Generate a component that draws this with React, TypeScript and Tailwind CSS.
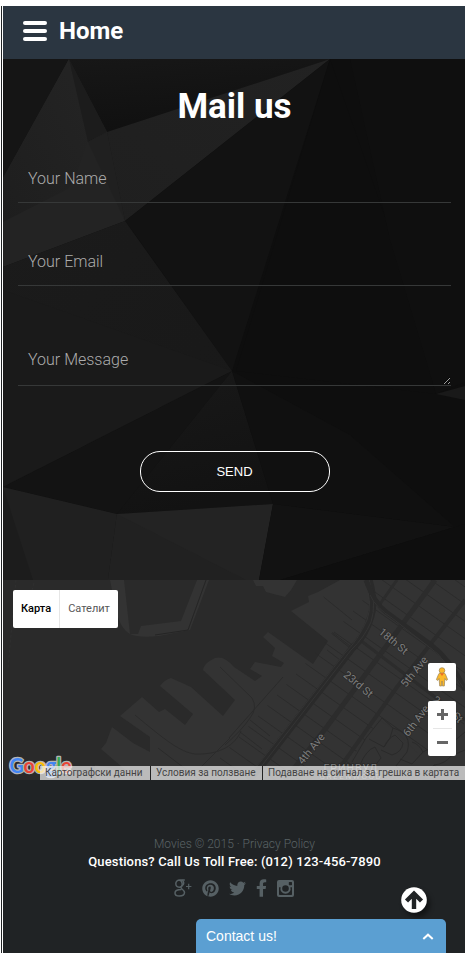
import React from "react";
import { FaPinterest, FaTwitter, FaFacebookF } from "react-icons/fa";

type Facet = { p: string; c: string };

const facets: Facet[] = [
  { p: "3,59 69,59 3,178", c: "#151515" },
  { p: "69,59 330,59 107,132", c: "url(#topShade)" },
  { p: "69,59 3,178 3,267 125,221 107,132", c: "#232323" },
  { p: "69,59 88,142 75,178 68,189 3,222 3,178", c: "url(#leftShade)" },
  { p: "69,59 107,132 88,142", c: "#1c1c1c" },
  { p: "107,132 88,142 125,221", c: "#202020" },
  { p: "330,59 107,132 125,221", c: "url(#beam)" },
  { p: "330,59 125,221 139,240 232,371", c: "#121212" },
  { p: "330,59 275,242 236,371 436,394 400,260", c: "#0e0e0e" },
  { p: "125,221 232,371 3,487 3,267", c: "url(#midShade)" },
  { p: "3,290 232,371 3,487", c: "#1a1a1a" },
  { p: "232,371 3,487 117,514", c: "#131313" },
  { p: "232,371 117,514 273,504", c: "url(#lowShade)" },
  { p: "3,487 117,514 108,580 3,580", c: "#202020" },
  { p: "3,487 33,580 3,580", c: "#1c1c1c" },
  { p: "117,514 273,504 259,580 108,580", c: "#232323" },
  { p: "117,514 246,580 108,580", c: "#212121" },
  { p: "232,371 350,435 455,527 273,504", c: "#101010" },
  { p: "273,504 455,527 280,580 259,580", c: "#121212" },
  { p: "455,527 465,524 465,580 280,580", c: "#0e0e0e" },
  { p: "390,240 436,394 465,382 465,59 350,59", c: "#0f0f0f" },
  { p: "436,394 465,386 465,400", c: "#191919" },
];

function PolyBackground() {
  return (
    <svg className="absolute inset-0 h-full w-full" viewBox="3 59 462 521" preserveAspectRatio="none" aria-hidden="true">
      <defs>
        <linearGradient id="topShade" x1="0" y1="0" x2="0.3" y2="1">
          <stop offset="0" stopColor="#171717" />
          <stop offset="1" stopColor="#101010" />
        </linearGradient>
        <linearGradient id="leftShade" x1="1" y1="0" x2="0" y2="1">
          <stop offset="0" stopColor="#242424" />
          <stop offset="1" stopColor="#1e1e1e" />
        </linearGradient>
        <linearGradient id="beam" x1="1" y1="0" x2="0" y2="1">
          <stop offset="0" stopColor="#222222" />
          <stop offset="1" stopColor="#1f1f1f" />
        </linearGradient>
        <linearGradient id="midShade" x1="0" y1="0" x2="1" y2="1">
          <stop offset="0" stopColor="#1b1b1b" />
          <stop offset="1" stopColor="#181818" />
        </linearGradient>
        <linearGradient id="lowShade" x1="0" y1="0" x2="0.3" y2="1">
          <stop offset="0" stopColor="#191919" />
          <stop offset="1" stopColor="#121212" />
        </linearGradient>
      </defs>
      <rect x="3" y="59" width="462" height="521" fill="#0e0e0e" />
      {facets.map((f, i) => (
        <polygon key={i} points={f.p} fill={f.c} />
      ))}
    </svg>
  );
}

const blocks = Array.from({ length: 26 }, (_, i) => i);

function StreetMap() {
  return (
    <svg className="absolute inset-0 h-full w-full" viewBox="3 580 462 200" preserveAspectRatio="none" aria-hidden="true">
      <defs>
        <clipPath id="city">
          <path d="M322,592 L345,580 H465 V780 H190 L206,757 L235,740 L268,690 L300,665 L335,630 Z" />
        </clipPath>
      </defs>
      <rect x="3" y="580" width="462" height="200" fill="#2a2a2a" />
      <g fill="#333333">
        <path d="M110,580 H124 L130,634 L138,634 L141,626 L181,621 L197,580 H209 L190,630 L159,636 Q138,638 130,634 Q119,628 115,605 Z" />
        <path d="M253,580 L256,586 L263,586 L266,592 L285,597 L291,590 L297,580 Z" />
        <path d="M340,580 L318,592 L308,596 L309,602 L291,611 L328,641 L313,664 L268,632 L263,637 L275,648 L272,656 L284,663 L281,667 L255,662 L250,669 L262,676 L255,681 L234,667 Q224,655 215,658 Q204,663 203,670 L235,700 L223,716 L191,687 L171,678 Q164,680 160,686 L193,714 L185,725 L165,709 L159,712 L142,697 L120,716 L150,737 V752 L133,743 L112,727 L110,732 L106,743 L101,749 L128,772 L95,765 L96,780 H465 V580 Z" />
      </g>
      <path d="M16,580 L8,668 M34,583 L24,620" stroke="#333" strokeWidth=".6" fill="none" strokeDasharray="3 2" />
      <path d="M155,635 L188,630 L206,580" stroke="#252525" strokeWidth="1" fill="none" />
      <path d="M135,715 C165,740 180,752 195,754 C220,755 235,745 241,731 M158,748 L200,780 M229,738 L283,677 M200,768 L230,738 M220,667 L252,698 Q258,708 250,718 Q242,730 225,745" stroke="#2b2b2b" strokeWidth="1" fill="none" />
      <g clipPath="url(#city)">
        <g stroke="#2a2a2a" strokeWidth=".8">
          {blocks.map((i) => (
            <path key={i} d={`M${410 - i * 9.5},${548 + i * 10.5} l130,92`} />
          ))}
          <path d="M315,590 L352,620 M303,610 L350,646 M330,632 L350,648 M327,650 L340,660 M250,720 L270,736 M240,732 L262,749" />
        </g>
        <g stroke="#2c2c2c" fill="none">
          <path d="M435,580 L326,728 L285,780" strokeWidth="5" />
          <path d="M465,600 L397,687 L344,762 L325,780" strokeWidth="4" />
          <path d="M397,580 L380,604 M360,640 L465,720" strokeWidth="3" />
        </g>
        <path d="M367,573 Q376,600 371,616 Q366,635 351,650 L258,770 L248,780" stroke="#2a2a2a" strokeWidth="7" fill="none" />
        <path d="M365,580 Q373,604 367,620 Q358,640 345,653 L254,770 M369,580 Q377,604 371,622 Q364,638 351,650 L260,768" stroke="#353535" strokeWidth=".9" fill="none" />
        <path d="M366,580 Q374,603 386,612 L430,644 Q452,661 465,690" stroke="#2a2a2a" strokeWidth="5" fill="none" />
        <path d="M370,595 Q376,608 392,618 L438,654 Q452,670 463,687" stroke="#383838" strokeWidth=".7" fill="none" />
      </g>
      <path d="M358,780 Q346,765 356,752 L379,720 L392,728 L420,755 L466,735 V780 Z" fill="#333333" />
      <g stroke="#2a2a2a" strokeWidth="1" fill="none">
        <path d="M352,762 L366,738 L382,718 L393,728 L390,738 L384,747 L369,739 M360,765 Q366,750 375,747 L381,758 L366,777 M384,747 Q388,738 395,735 L403,743 Q402,752 392,755 L381,750 M393,728 Q413,734 407,752 L396,766 L405,774 M412,742 Q419,744 423,752 L412,764 L400,759 M423,752 Q434,745 444,746 L451,756 Q445,764 434,765 L424,777 M434,765 L448,777 M451,756 L465,750 M442,734 L453,742 L465,732" />
      </g>
      <g fill="#7d7d7d" stroke="#292929" strokeWidth="1.5" paintOrder="stroke" fontFamily="Roboto, sans-serif" fontSize="10.8" textAnchor="middle">
        <text transform="translate(391,644) rotate(40)">18th St</text>
        <text transform="translate(356,687) rotate(40)">23rd St</text>
        <text transform="translate(417,674) rotate(-51)">5th Ave</text>
        <text transform="translate(419,723) rotate(-53)">6th Ave</text>
        <text transform="translate(314,751) rotate(-51)">4th Ave</text>
        <text transform="translate(434,703) rotate(40)">2</text>
        <text transform="translate(455,720) rotate(45)">St</text>
        <text x="351" y="771.5" fontSize="10.5" letterSpacing="1">ГРИНВУД</text>
        <text x="351" y="779" fontSize="8" letterSpacing="1.6">GREENWOOD</text>
      </g>
    </svg>
  );
}

function GoogleLogo() {
  return (
    <svg className="absolute bottom-0 left-[3px] h-[28px] w-[70px]" viewBox="0 0 70 28">
      <text x="3.5" y="20.5" fontFamily="Lato, sans-serif" fontWeight="700" fontSize="20" textLength="62" lengthAdjust="spacingAndGlyphs" stroke="#b5b5b5" strokeWidth="2.6" strokeLinejoin="round" paintOrder="stroke">
        <tspan fill="#4285f4">G</tspan>
        <tspan fill="#ea4335">o</tspan>
        <tspan fill="#fbbc05">o</tspan>
        <tspan fill="#4285f4">g</tspan>
        <tspan fill="#34a853">l</tspan>
        <tspan fill="#ea4335">e</tspan>
      </text>
    </svg>
  );
}

function Pegman() {
  return (
    <svg className="h-[20px] w-[14px]" viewBox="0 0 14 20">
      <path d="M3.6,7.2 Q4,6 5.5,6 H8.5 Q10,6 10.4,7.2 L12.6,12.6 L11.2,13.4 L9.9,11.5 L9.3,19 H7.4 L7,14 L6.6,19 H4.7 L4.1,11.5 L2.8,13.4 L1.4,12.6 Z" fill="#fbb829" stroke="#9b8457" strokeWidth=".7" />
      <circle cx="7" cy="3.5" r="2.8" fill="#fbb829" stroke="#9b8457" strokeWidth=".7" />
      <path d="M5,6.2 H9 L7,9 Z" fill="#ee6c23" />
    </svg>
  );
}

function GooglePlus() {
  return (
    <svg className="h-[18px] w-[18px]" viewBox="0 0 18 18" fill="none" stroke="#566064">
      <path d="M10.8,1 H6 C3.4,0.9 1.8,2.6 1.8,4.8 C1.9,7 3.3,8.2 5.2,8.2 C7.5,8.2 8.4,6.8 8.2,4.8 C8,2.5 7,1.2 5.4,1.2" strokeWidth="1.5" />
      <path d="M8.2,1.2 C10.4,3 10,5.3 8.4,6.5 C6.8,7.7 6.3,8.4 7.7,9.7 C9.4,11.1 10.5,12 10.5,13.6 C10.5,15.7 8.4,17.1 5.4,17.1 C2.6,17.1 1,15.9 1,14 C1,12 3,10.6 7.4,10.6" strokeWidth="1.5" />
      <path d="M14.7,4.8 V10.2 M12,7.5 H17.4" strokeWidth="1.2" />
    </svg>
  );
}

function Instagram() {
  return (
    <svg className="ml-[10px] h-[17px] w-[17px]" viewBox="0 0 17 17">
      <path
        fill="#566064"
        fillRule="evenodd"
        d="M2,0 H15 Q17,0 17,2 V15 Q17,17 15,17 H2 Q0,17 0,15 V2 Q0,0 2,0 Z M12.4,2 Q11.8,2 11.8,2.6 V4.6 Q11.8,5.2 12.4,5.2 H14.4 Q15,5.2 15,4.6 V2.6 Q15,2 14.4,2 Z M2,7.2 V14.3 Q2,15 2.7,15 H14.3 Q15,15 15,14.3 V7.2 H13.4 A5.1,5.1 0 1 1 3.6,7.2 Z M8.5,5.2 A3.3,3.3 0 1 0 8.5,11.8 A3.3,3.3 0 1 0 8.5,5.2 Z"
      />
    </svg>
  );
}

export default function App() {
  const field =
    "block w-full border-0 border-b border-[#363838] bg-transparent px-[10px] text-[16px] font-light text-[#aaa] outline-none placeholder:text-[#acacac] placeholder:opacity-100";
  return (
    <div className="h-[961px] w-[467px] overflow-hidden bg-white pt-[6px] pr-[2px] pl-px font-['Roboto',sans-serif]">
      <div className="relative h-[947px] border-l border-[#202325] pl-px">
        <header className="flex h-[53px] items-center bg-[#2b3641] pl-[20px]">
          <div className="mt-[-3px] flex w-[24px] flex-col gap-[4px]">
            <span className="h-[4px] rounded-full bg-white" />
            <span className="h-[4px] rounded-full bg-white" />
            <span className="h-[4px] rounded-full bg-white" />
          </div>
          <span className="mt-[-3px] ml-[12px] text-[24px] leading-none font-bold text-white">Home</span>
        </header>

        <section className="relative h-[521px]">
          <PolyBackground />
          <form className="relative flex h-full flex-col pr-[14px] pl-[15px]">
            <h1 className="pt-[28px] text-center text-[35px] leading-[40px] font-bold text-white">Mail us</h1>
            <input className={`${field} mt-[27px] h-[49px]`} placeholder="Your Name" />
            <input className={`${field} mt-[34px] h-[49px]`} placeholder="Your Email" />
            <textarea className={`${field} mt-[49px] h-[51px] resize-y pt-[13px] leading-[24px]`} placeholder="Your Message" />
            <button type="button" className="mt-[65px] ml-[122px] h-[41px] w-[190px] rounded-[20px] border border-white pr-px font-['Liberation_Sans',Arial,sans-serif] text-[13px] text-white">
              SEND
            </button>
          </form>
        </section>

        <section className="relative h-[200px] overflow-hidden">
          <StreetMap />
          <GoogleLogo />
          <div className="relative flex h-full flex-col justify-between">
            <div className="mt-[10px] ml-[10px] flex h-[38px] w-[105px] items-center rounded-[2px] bg-white text-[11px]">
              <span className="flex h-full w-[47px] items-center justify-center border-r border-[#e6e6e6] font-medium text-black">Карта</span>
              <span className="flex-1 text-center text-[#565656]">Сателит</span>
            </div>
            <div className="ml-[37px] flex h-[14px] bg-[#f5f5f5]/70 text-[10px] leading-[14px] whitespace-nowrap text-[#444]">
              <span className="w-[111px] border-r border-[#222] pl-[5px]">Картографски данни</span>
              <span className="w-[112px] border-r border-[#222] pl-[5px]">Условия за ползване</span>
              <span className="pl-[5px]">Подаване на сигнал за грешка в картата</span>
            </div>
          </div>
          <div className="absolute top-[83px] right-[9px] flex w-[28px] flex-col gap-[10px]">
            <div className="flex h-[28px] items-center justify-center rounded-[2px] bg-white">
              <Pegman />
            </div>
            <div className="flex h-[55px] flex-col items-center rounded-[2px] bg-white">
              <div className="flex flex-1 items-center">
                <svg className="h-[11px] w-[11px]" viewBox="0 0 11 11" stroke="#666" strokeWidth="3">
                  <path d="M0,5.5 H11 M5.5,0 V11" />
                </svg>
              </div>
              <div className="h-px w-[19px] bg-[#e6e6e6]" />
              <div className="flex flex-1 items-center">
                <div className="h-[3px] w-[11px] bg-[#666]" />
              </div>
            </div>
          </div>
        </section>

        <footer className="flex h-[173px] flex-col items-center bg-[#202325] pt-[55px]">
          <p className="pl-px text-[12px] leading-[18px] font-light text-[#5b6366]">Movies © 2015 · Privacy Policy</p>
          <p className="pl-px text-[13px] leading-[18px] font-medium tracking-[0.15px] text-white">Questions? Call Us Toll Free: (012) 123-456-7890</p>
          <div className="mt-[8px] flex h-[18px] items-center text-[#566064]">
            <GooglePlus />
            <FaPinterest className="ml-[10px] h-[17px] w-[17px]" />
            <FaTwitter className="ml-[10px] h-[17px] w-[17px]" />
            <FaFacebookF className="ml-[10px] h-[18px] w-[11px]" />
            <Instagram />
          </div>
        </footer>

        <div className="absolute right-[38px] bottom-[40px] h-[26px] w-[26px] rounded-full shadow-[3px_4px_5px_rgba(0,0,0,0.45)]">
          <svg className="h-full w-full" viewBox="0 0 26 26">
            <circle cx="13" cy="13" r="12.8" fill="white" />
            <path d="M13,22 V8 M5.5,14 L13,6.5 L20.5,14" fill="none" stroke="#202325" strokeWidth="4.4" />
          </svg>
        </div>
        <div className="absolute right-[19px] bottom-0 flex h-[34px] w-[250px] items-center justify-between rounded-t-[5px] bg-[#5b9fd2] pr-[12px] pl-[10px] font-['Liberation_Sans',Arial,sans-serif] text-[14px] text-white">
          <span className="origin-center scale-y-[1.08]">Contact us!</span>
          <svg className="h-[7px] w-[12px]" viewBox="0 0 12 7" fill="none" stroke="white" strokeWidth="2">
            <path d="M1.3,6 L6,1.7 L10.7,6" />
          </svg>
        </div>
      </div>
    </div>
  );
}
